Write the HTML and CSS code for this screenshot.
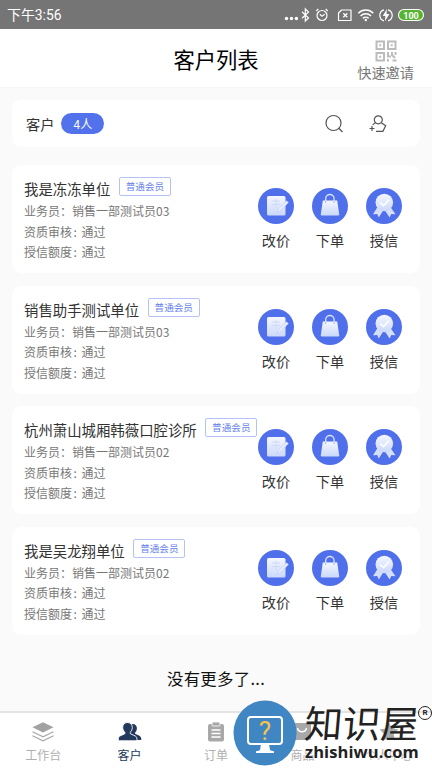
FILE: index.html
```html
<!DOCTYPE html>
<html lang="zh-CN">
<head>
<meta charset="utf-8">
<title>客户列表</title>
<link rel="stylesheet" href="styles.css">
</head>
<body>
<svg class="defs" width="0" height="0" aria-hidden="true">
  <defs>
    <linearGradient id="shade" x1="0" y1="0" x2="0" y2="1"><stop offset="0" stop-color="#f4f7ff"/><stop offset="1" stop-color="#cbd8fb"/></linearGradient>
    <symbol id="price" viewBox="0 0 36 36">
      <circle cx="18" cy="18" r="18" fill="#4f6feb"/>
      <rect x="9" y="8" width="18.5" height="19.5" rx="1.6" fill="url(#shade)"/>
      <path d="M14 13h8M14 16.5h8M18 11v9" stroke="#cfd9f8" stroke-width="1" fill="none"/>
      <path d="M19.2 24.2l1-3.2 8.3-8.2 2 1.8-8.2 8.3z" fill="#e6edff" stroke="#b3c3f8" stroke-width=".5"/>
    </symbol>
    <symbol id="bag" viewBox="0 0 36 36">
      <circle cx="18" cy="18" r="18" fill="#4f6feb"/>
      <path d="M13.7 14v-3.300a4.200 4.200 0 0 1 8.400 0V14" fill="none" stroke="#d8e2fd" stroke-width="1.300"/>
      <path d="M10.800 12.600h14.400l2 13.600q.1 1.200-1.200 1.200H10q-1.300 0-1.200-1.200z" fill="url(#shade)"/>
      <path d="M13.700 13v2M22.100 13v2" stroke="#9fb3f3"/>
    </symbol>
    <symbol id="medal" viewBox="0 0 36 36">
      <circle cx="18" cy="18" r="18" fill="#4f6feb"/>
      <path d="M11.500 19l-4.500 7.200 4.200-.3 1.600 3.600 4.400-7zM24.500 19l5 7.200-4.200-.3-1.700 3.600-4.600-7z" fill="#d3dffd"/>
      <circle cx="18.300" cy="14.500" r="8.800" fill="url(#shade)"/>
      <path d="M14.300 14.600l3.200 3 5.500-5.800" fill="none" stroke="#fff" stroke-width="1.600"/>
    </symbol>
  </defs>
</svg>

<div class="statusbar">
  <span class="time">下午3:56</span>
  <svg class="status-icons" viewBox="0 0 144 20" fill="none" stroke="#fff">
    <g fill="#fff" stroke="none"><circle cx="3.500" cy="13.500" r="1.700"/><circle cx="8.500" cy="13.500" r="1.700"/><circle cx="13.400" cy="13.500" r="1.700"/></g>
    <path d="M19 6.700l6.500 6.300-3.200 3V4l3.200 3-6.500 6.300" stroke-width="1.200"/>
    <circle cx="39" cy="10.500" r="5" stroke-width="1.200"/><path d="M36.800 9.300L39 11.300l2.700-2M33.300 6l2-2M44.700 6l-2-2" stroke-width="1.200"/>
    <path d="M58.500 5H68v10.500H55.500V8z" stroke-width="1.200" stroke-linejoin="round"/><path d="M60.300 8.300l4 4M64.300 8.300l-4 4" stroke-width="1.300"/>
    <path d="M75.300 8.200a10.500 10.500 0 0 1 15 0M77.600 10.900a7.200 7.200 0 0 1 10.400 0M80 13.400a4 4 0 0 1 5.600 0" stroke-width="1.500"/><circle cx="82.800" cy="15" r="1.200" fill="#fff" stroke="none"/>
    <path d="M101 4.800a5.700 5.700 0 0 0 0 11M105 4.800a5.700 5.700 0 0 1 0 11" stroke-width="1.200"/><path d="M103.800 4l-4 6.900h2.600l-.5 5.300 4.500-7.200h-2.900z" fill="#fff" stroke="none"/>
    <rect x="115.500" y="4.500" width="25" height="11" rx="5.500" fill="#55b52f" stroke-width="1.100"/>
    <text x="128" y="13.500" text-anchor="middle" class="battery">100</text>
  </svg>
</div>

<header class="header">
  <h1>客户列表</h1>
  <div class="invite">
    <svg width="22" height="22" viewBox="0 0 22 22" fill="none" stroke="#bcbcbc" stroke-width="2">
      <path d="M1.500 1.500h7.500v7.500H1.500zM13 1.500h7.500v7.500H13zM1.500 13h7.500v7.500H1.500z"/>
      <path d="M4.200 5.200h2M15.700 5.200h2M4.200 16.800h2M13 12v4.500h3M17 12v3l3 3M20.500 12v3M13 19v2.500M17.500 20.500h4"/>
    </svg>
    <span>快速邀请</span>
  </div>
</header>

<main class="content">
  <section class="summary">
    <span class="summary-label">客户</span><span class="count">4人</span>
    <svg class="search" width="20" height="20" viewBox="0 0 20 20" fill="none" stroke="#555" stroke-width="1.200"><circle cx="9.500" cy="9" r="7.500"/><path d="M14.500 14l4 4"/></svg>
    <svg class="adduser" width="20" height="20" viewBox="0 0 20 20" fill="none" stroke="#555" stroke-width="1.200"><circle cx="10.300" cy="5.800" r="4"/><path d="M7.500 8.800Q5.500 10 4.700 11M13.200 8.800l4.500 3-2.800 5.500H8M1.500 14.500h5M4 12v5"/></svg>
  </section>

  <section class="list">
    <article class="card">
      <div class="info">
        <div class="name">我是冻冻单位<span class="tag">普通会员</span></div>
        <p>业务员：销售一部测试员03</p><p>资质审核<i>:</i>通过</p><p>授信额度<i>:</i>通过</p>
      </div>
      <div class="actions">
        <div><svg><use href="#price"/></svg>改价</div><div><svg><use href="#bag"/></svg>下单</div><div><svg><use href="#medal"/></svg>授信</div>
      </div>
    </article>
    <article class="card">
      <div class="info">
        <div class="name">销售助手测试单位<span class="tag">普通会员</span></div>
        <p>业务员：销售一部测试员03</p><p>资质审核<i>:</i>通过</p><p>授信额度<i>:</i>通过</p>
      </div>
      <div class="actions">
        <div><svg><use href="#price"/></svg>改价</div><div><svg><use href="#bag"/></svg>下单</div><div><svg><use href="#medal"/></svg>授信</div>
      </div>
    </article>
    <article class="card">
      <div class="info">
        <div class="name">杭州萧山城厢韩薇口腔诊所<span class="tag">普通会员</span></div>
        <p>业务员：销售一部测试员02</p><p>资质审核<i>:</i>通过</p><p>授信额度<i>:</i>通过</p>
      </div>
      <div class="actions">
        <div><svg><use href="#price"/></svg>改价</div><div><svg><use href="#bag"/></svg>下单</div><div><svg><use href="#medal"/></svg>授信</div>
      </div>
    </article>
    <article class="card">
      <div class="info">
        <div class="name">我是吴龙翔单位<span class="tag">普通会员</span></div>
        <p>业务员：销售一部测试员02</p><p>资质审核<i>:</i>通过</p><p>授信额度<i>:</i>通过</p>
      </div>
      <div class="actions">
        <div><svg><use href="#price"/></svg>改价</div><div><svg><use href="#bag"/></svg>下单</div><div><svg><use href="#medal"/></svg>授信</div>
      </div>
    </article>
  </section>
  <p class="end">没有更多了...</p>
</main>

<nav class="tabbar">
  <div class="tab"><svg viewBox="0 0 24 24"><path d="M12 1.300l10.500 5L12 11.500 1.500 6.300z" fill="#a2a2a2"/><path d="M1.500 10.800L12 15.900l10.500-5.100M1.500 14.800L12 19.900l10.500-5.100" fill="none" stroke="#a8a8a8" stroke-width="1.200"/></svg>工作台</div>
  <div class="tab active"><svg viewBox="0 0 24 24" fill="#23395b"><path d="M14.300 3c3 0 4.600 1.800 4.600 4.300 0 1.800-.7 3.200-1.800 4.200v1.300l4.300 2c1.400.7 1.900 2 1.900 4.300H12V3.800z"/><path d="M9.500 1.500c3 0 4.800 2 4.800 5 0 2-.9 3.600-2 4.700v1.500l5 2.300c1.200.6 1.700 1.700 1.700 4.800H.3c0-3.100.4-4.200 1.600-4.800l5-2.300v-1.500c-1.300-1.100-2.200-2.700-2.200-4.700 0-3 1.800-5 4.800-5z" stroke="#fff" stroke-width=".9"/></svg>客户</div>
  <div class="tab"><svg viewBox="0 0 24 24"><rect x="4" y="3" width="16" height="17.500" rx="2" fill="#a8a8a8"/><rect x="8" y="1" width="8" height="4" rx="1" fill="#a8a8a8" stroke="#fff" stroke-width=".8"/><path d="M7.500 9h9M7.500 12.500h9M7.500 16h9" stroke="#fff" stroke-width="1.300"/></svg>订单</div>
  <div class="tab"><svg viewBox="0 0 24 24"><rect x="3" y="2" width="18" height="17" rx="2" fill="#a8a8a8"/><path d="M7.500 7c1 5 8 5 9 0" fill="none" stroke="#fff" stroke-width="1.400"/></svg>商品</div>
  <div class="tab"><svg viewBox="0 0 24 24"><path d="M12 1.500l2.900 6 6.500.9-4.700 4.600 1.100 6.500-5.800-3.100-5.800 3.100 1.100-6.500-4.700-4.600 6.500-.9z" fill="#a8a8a8"/></svg>个人中心</div>
</nav>

<div class="watermark">
  <svg width="64" height="66" viewBox="0 0 64 66"><ellipse cx="32" cy="33" rx="31.500" ry="32.500" fill="#3f86c2"/><rect x="15" y="17" width="34" height="27" rx="3" fill="none" stroke="#fff" stroke-width="2"/><path d="M28 44h8l1 6q1 1 4 1.200V53H23v-1.800q3-.2 4-1.200z" fill="#fff"/><text x="32" y="39.500" text-anchor="middle" class="question">?</text></svg>
  <div class="brand"><div class="brand-name">知识屋</div><div class="brand-url">zhishiwu.com</div></div>
  <span class="registered">R</span>
</div>
</body>
</html>
```
FILE: styles.css
```css
* { box-sizing: border-box; }
body {
  margin: 0;
  width: 432px;
  height: 768px;
  overflow: hidden;
  display: flex;
  flex-direction: column;
  position: relative;
  background: #fafafa;
  color: #333;
  font-family: "Noto Sans CJK SC", sans-serif;
}
p, h1 { margin: 0; font-weight: 400; }
.defs { position: absolute; }
.statusbar {
  flex: none;
  height: 29px;
  padding: 0 5px 0 7px;
  display: flex;
  align-items: center;
  justify-content: space-between;
  background: #757575;
  color: #fff;
}
.time { font: 13.9px/30px Roboto, "Noto Sans CJK SC", sans-serif; }
.status-icons { width: 144px; height: 20px; }
.battery { font: 700 9px Roboto, sans-serif; fill: #fff; stroke: none; }
.header {
  flex: none;
  height: 59px;
  display: grid;
  grid-template-columns: 1fr auto 1fr;
  background: #fff;
  border-bottom: 1px solid #f4f4f4;
  color: #000;
}
.header h1 { grid-column: 2; font-size: 21.3px; line-height: 60px; }
.invite {
  justify-self: end;
  margin-right: 18px;
  padding-top: 11px;
  display: flex;
  flex-direction: column;
  align-items: center;
  font-size: 14.2px;
  line-height: 20px;
  color: #777;
}
.content { flex: 1; padding: 12px 12px 0; }
.summary {
  height: 47px;
  display: flex;
  align-items: center;
  padding: 0 32px 0 14px;
  border-radius: 9px;
  background: #fff;
}
.summary-label { font-size: 14.2px; line-height: 24px; }
.count {
  width: 43px;
  height: 21px;
  margin-left: 7px;
  border-radius: 11px;
  background: #5272ec;
  color: #fff;
  font-size: 12px;
  line-height: 21px;
  text-align: center;
}
.search { margin-left: auto; }
.adduser { margin-left: 24px; }
.list { display: grid; gap: 12.6px; margin-top: 18px; }
.card {
  height: 108px;
  display: flex;
  justify-content: space-between;
  padding: 0 9px 0 12px;
  border-radius: 9px;
  background: #fff;
}
.info { width: 234px; padding-top: 12px; white-space: nowrap; }
.name { display: flex; font-size: 14.4px; line-height: 24px; height: 24px; }
.tag {
  width: 52px;
  height: 19px;
  margin-left: 8.6px;
  border: 1px solid #b5c2f7;
  border-radius: 2px;
  color: #6681ec;
  font-size: 9.6px;
  line-height: 17px;
  text-align: center;
}
.info p { color: #777; font-size: 12px; line-height: 20.5px; }
.info i { display: inline-block; width: 9.5px; padding-left: 1.5px; font-style: normal; }
.actions { display: flex; padding-top: 23px; margin-left: -9px; }
.actions div { width: 54px; font-size: 14.2px; line-height: 20px; text-align: center; }
.actions svg { display: block; width: 36px; height: 36px; margin: 0 auto 6px; }
.end { margin-top: 31px; color: #111; font-size: 16.4px; letter-spacing: .3px; line-height: 24px; text-align: center; }
.tabbar {
  flex: none;
  height: 57px;
  display: flex;
  background: #fff;
  border-top: 2px solid #e4e4e4;
}
.tab {
  flex: 1;
  padding-top: 8px;
  display: flex;
  flex-direction: column;
  align-items: center;
  font-size: 12px;
  line-height: 20px;
  color: #b0b0b0;
}
.tab svg { width: 24px; height: 24px; }
.tab.active { color: #23395b; }
.watermark {
  position: absolute;
  left: 233px;
  top: 700px;
  display: flex;
  gap: 8px;
}
.question { font: 26px Roboto, sans-serif; fill: #f8c34b; }
.brand { color: #222; white-space: nowrap; }
.brand-name {
  height: 43px;
  font-size: 38px;
  line-height: 44px;
  font-weight: 400;
  transform: skewX(-5deg);
}
.brand-url {
  font: 700 16.5px/18px "Open Sans", "Noto Sans", sans-serif;
  letter-spacing: .1px;
  text-shadow: 0 0 2px #fff, 0 0 2px #fff;
}
.registered {
  position: absolute;
  left: 185px;
  top: 6px;
  width: 14px;
  height: 14px;
  border: 1.5px solid #222;
  border-radius: 50%;
  font: 700 8px/11px Roboto, sans-serif;
  text-align: center;
  color: #222;
}
```
